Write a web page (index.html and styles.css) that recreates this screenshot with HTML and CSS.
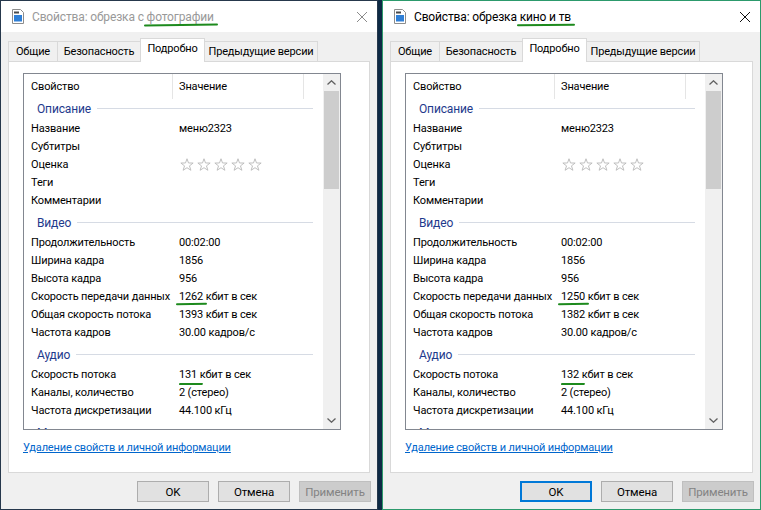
FILE: index.html
```html
<!DOCTYPE html>
<html lang="ru">
<head>
    <meta charset="UTF-8">
    <title>Свойства: обрезка</title>
    <link rel="stylesheet" href="styles.css">
</head>
<body>
    <svg class="defs" width="0" height="0">
        <symbol id="star" viewBox="0 0 13 13">
            <path d="M6.5 0.7L7.9 4.6L12.2 4.7L8.8 7.3L10.1 11.4L6.5 9L2.9 11.4L4.2 7.3L0.8 4.7L5.1 4.6Z" fill="#fff" stroke="#bdbdbd" stroke-width="0.9"/>
        </symbol>
        <symbol id="doc" viewBox="0 0 12 15">
            <path d="M0.5 0.5H8.5L11.5 3.5V14.5H0.5Z" fill="#fff" stroke="#8c8c8c"/>
            <rect x="2" y="2.5" width="5" height="2" fill="#4a4a4a"/>
            <rect x="2" y="6" width="8" height="6.5" fill="#2f7fd6"/>
        </symbol>
        <symbol id="chev" viewBox="0 0 9 5">
            <path d="M0.5 4.5L4.5 0.8L8.5 4.5" fill="none" stroke="#606060" stroke-width="1.3"/>
        </symbol>
    </svg>

    <div class="desktop">
        <!-- окно 1: фотографии -->
        <div class="window">
            <div class="titlebar">
                <svg class="title-icon"><use href="#doc"/></svg>
                <div class="title">Свойства: обрезка с <span class="mark">фотографии</span></div>
                <div class="close">
                    <svg width="10" height="10" viewBox="0 0 10 10"><path d="M0 0L10 10M10 0L0 10" stroke="currentColor" stroke-width="1"/></svg>
                </div>
            </div>
            <div class="content">
                <div class="tabs">
                    <div class="tab tab-general">Общие</div>
                    <div class="tab tab-security">Безопасность</div>
                    <div class="tab tab-details selected">Подробно</div>
                    <div class="tab tab-prev">Предыдущие версии</div>
                </div>
                <div class="panel">
                    <div class="listview">
                        <div class="lv-body">
                            <div class="lv-header">
                                <div class="hcell">Свойство</div>
                                <div class="hcell">Значение</div>
                                <div class="hcell"></div>
                            </div>
                            <div class="group"><span>Описание</span></div>
                            <div class="row"><span>Название</span><span>меню2323</span></div>
                            <div class="row"><span>Субтитры</span><span></span></div>
                            <div class="row"><span>Оценка</span>
                                <span class="stars">
                                    <svg><use href="#star"/></svg><svg><use href="#star"/></svg><svg><use href="#star"/></svg><svg><use href="#star"/></svg><svg><use href="#star"/></svg>
                                </span>
                            </div>
                            <div class="row"><span>Теги</span><span></span></div>
                            <div class="row"><span>Комментарии</span><span></span></div>
                            <div class="group"><span>Видео</span></div>
                            <div class="row"><span>Продолжительность</span><span>00:02:00</span></div>
                            <div class="row"><span>Ширина кадра</span><span>1856</span></div>
                            <div class="row"><span>Высота кадра</span><span>956</span></div>
                            <div class="row"><span>Скорость передачи данных</span><span><span class="mark">1262</span> кбит в сек</span></div>
                            <div class="row"><span>Общая скорость потока</span><span>1393 кбит в сек</span></div>
                            <div class="row"><span>Частота кадров</span><span>30.00 кадров/с</span></div>
                            <div class="group"><span>Аудио</span></div>
                            <div class="row"><span>Скорость потока</span><span><span class="mark low">131</span> кбит в сек</span></div>
                            <div class="row"><span>Каналы, количество</span><span>2 (стерео)</span></div>
                            <div class="row"><span>Частота дискретизации</span><span>44.100 кГц</span></div>
                            <div class="group"><span>Мультимедиа</span></div>
                        </div>
                        <div class="scrollbar">
                            <div class="sb-btn"><svg><use href="#chev"/></svg></div>
                            <div class="sb-track"><div class="sb-thumb"></div></div>
                            <div class="sb-btn down"><svg><use href="#chev"/></svg></div>
                        </div>
                    </div>
                    <a class="link" href="#">Удаление свойств и личной информации</a>
                </div>
                <div class="buttons">
                    <button class="btn">OK</button>
                    <button class="btn">Отмена</button>
                    <button class="btn" disabled>Применить</button>
                </div>
            </div>
        </div>

        <!-- окно 2: кино и тв -->
        <div class="window active">
            <div class="titlebar">
                <svg class="title-icon"><use href="#doc"/></svg>
                <div class="title">Свойства: обрезка <span class="mark">кино и тв</span></div>
                <div class="close">
                    <svg width="10" height="10" viewBox="0 0 10 10"><path d="M0 0L10 10M10 0L0 10" stroke="currentColor" stroke-width="1"/></svg>
                </div>
            </div>
            <div class="content">
                <div class="tabs">
                    <div class="tab tab-general">Общие</div>
                    <div class="tab tab-security">Безопасность</div>
                    <div class="tab tab-details selected">Подробно</div>
                    <div class="tab tab-prev">Предыдущие версии</div>
                </div>
                <div class="panel">
                    <div class="listview">
                        <div class="lv-body">
                            <div class="lv-header">
                                <div class="hcell">Свойство</div>
                                <div class="hcell">Значение</div>
                                <div class="hcell"></div>
                            </div>
                            <div class="group"><span>Описание</span></div>
                            <div class="row"><span>Название</span><span>меню2323</span></div>
                            <div class="row"><span>Субтитры</span><span></span></div>
                            <div class="row"><span>Оценка</span>
                                <span class="stars">
                                    <svg><use href="#star"/></svg><svg><use href="#star"/></svg><svg><use href="#star"/></svg><svg><use href="#star"/></svg><svg><use href="#star"/></svg>
                                </span>
                            </div>
                            <div class="row"><span>Теги</span><span></span></div>
                            <div class="row"><span>Комментарии</span><span></span></div>
                            <div class="group"><span>Видео</span></div>
                            <div class="row"><span>Продолжительность</span><span>00:02:00</span></div>
                            <div class="row"><span>Ширина кадра</span><span>1856</span></div>
                            <div class="row"><span>Высота кадра</span><span>956</span></div>
                            <div class="row"><span>Скорость передачи данных</span><span><span class="mark">1250</span> кбит в сек</span></div>
                            <div class="row"><span>Общая скорость потока</span><span>1382 кбит в сек</span></div>
                            <div class="row"><span>Частота кадров</span><span>30.00 кадров/с</span></div>
                            <div class="group"><span>Аудио</span></div>
                            <div class="row"><span>Скорость потока</span><span><span class="mark low">132</span> кбит в сек</span></div>
                            <div class="row"><span>Каналы, количество</span><span>2 (стерео)</span></div>
                            <div class="row"><span>Частота дискретизации</span><span>44.100 кГц</span></div>
                            <div class="group"><span>Мультимедиа</span></div>
                        </div>
                        <div class="scrollbar">
                            <div class="sb-btn"><svg><use href="#chev"/></svg></div>
                            <div class="sb-track"><div class="sb-thumb"></div></div>
                            <div class="sb-btn down"><svg><use href="#chev"/></svg></div>
                        </div>
                    </div>
                    <a class="link" href="#">Удаление свойств и личной информации</a>
                </div>
                <div class="buttons">
                    <button class="btn default">OK</button>
                    <button class="btn">Отмена</button>
                    <button class="btn" disabled>Применить</button>
                </div>
            </div>
        </div>
    </div>
</body>
</html>
```

FILE: styles.css
```css
* {
    margin: 0;
    padding: 0;
    box-sizing: border-box;
}

body {
    font-family: Roboto, "Noto Sans", sans-serif;
    font-size: 11px;
    letter-spacing: -0.15px;
    color: #000;
    background: #0e2a45;
    overflow: hidden;
}

.defs {
    position: absolute;
}

.desktop {
    display: flex;
    gap: 4px;
    height: 510px;
}

.window {
    width: 378px;
    height: 510px;
    flex-shrink: 0;
    background: #f0f0f0;
    border: 1px solid #26384c;
    display: flex;
    flex-direction: column;
    overflow: hidden;
}

.window.active {
    width: 379px;
    border-color: #2c9a6c;
}

/* заголовок окна */
.titlebar {
    height: 31px;
    flex-shrink: 0;
    background: #fff;
    display: flex;
    align-items: center;
    padding-left: 11px;
}

.title-icon {
    width: 12px;
    height: 15px;
    margin-right: 8px;
}

.title {
    flex: 1;
    font-size: 12px;
    color: #999;
    white-space: nowrap;
}

.active .title {
    color: #000;
}

.close {
    width: 30px;
    display: flex;
    justify-content: center;
    color: #8a8a8a;
}

.active .close {
    color: #111;
}

/* зелёные пометки */
.mark {
    position: relative;
}

.mark::after {
    content: "";
    position: absolute;
    left: -3px;
    right: -4px;
    bottom: -2px;
    height: 2px;
    background: #1d8a1d;
    border-radius: 1px;
    transform: rotate(-0.6deg);
}

.mark.low::after {
    bottom: -4px;
    left: 0;
    right: -6px;
}

.content {
    flex: 1;
    padding: 6px 7px 0 7px;
    display: flex;
    flex-direction: column;
}

/* вкладки */
.tabs {
    display: flex;
    align-items: flex-end;
    height: 23px;
    position: relative;
    z-index: 1;
}

.tab {
    height: 20px;
    line-height: 19px;
    text-align: center;
    border: 1px solid #d9d9d9;
    border-bottom: none;
    margin-right: -1px;
    background: #f0f0f0;
    white-space: nowrap;
}

.tab-general {
    width: 50px;
}

.tab-security {
    width: 84px;
}

.tab-details {
    width: 65px;
}

.tab-prev {
    width: 114px;
}

.tab.selected {
    height: 24px;
    line-height: 20px;
    margin-bottom: -1px;
    background: #fff;
    position: relative;
    z-index: 2;
}

.panel {
    height: 412px;
    background: #fff;
    border: 1px solid #d9d9d9;
    padding: 11px 0 0 14px;
}

/* список свойств */
.listview {
    width: 318px;
    height: 357px;
    border: 1px solid #828790;
    display: flex;
}

.lv-body {
    flex: 1;
    overflow: hidden;
}

.lv-header {
    display: grid;
    grid-template-columns: 149px 131px 1fr;
    height: 23px;
}

.hcell {
    border-right: 1px solid #e5e5e5;
    padding-left: 7px;
    line-height: 25px;
}

.hcell:nth-child(2) {
    padding-left: 6px;
}

.hcell:last-child {
    border-right: none;
}

.group {
    height: 22px;
    margin-top: 2px;
    display: flex;
    align-items: center;
    padding-left: 13px;
    padding-top: 1px;
    font-size: 12px;
    color: #1e3a8c;
}

.lv-header + .group {
    margin-top: 0;
}

.group::after {
    content: "";
    flex: 1;
    height: 1px;
    margin: 0 10px 0 6px;
    background: #d6dbe4;
}

.row {
    display: grid;
    grid-template-columns: 149px 1fr;
    height: 18px;
    line-height: 19px;
    white-space: nowrap;
}

.row > span:first-child {
    padding-left: 7px;
}

.row > span:last-child {
    padding-left: 6px;
}

.stars {
    display: flex;
    align-items: center;
    gap: 3px;
    padding-left: 7px !important;
}

.stars svg {
    width: 14px;
    height: 14px;
}

/* полоса прокрутки */
.scrollbar {
    width: 17px;
    background: #f0f0f0;
    display: flex;
    flex-direction: column;
}

.sb-btn {
    height: 17px;
    display: flex;
    align-items: center;
    justify-content: center;
}

.sb-btn svg {
    width: 9px;
    height: 5px;
}

.sb-btn.down {
    transform: rotate(180deg);
}

.sb-track {
    flex: 1;
}

.sb-thumb {
    height: 98px;
    margin: 0 1px;
    background: #cdcdcd;
}

.link {
    display: inline-block;
    margin-top: 10px;
    line-height: 16px;
    color: #0066cc;
}

/* кнопки */
.buttons {
    display: flex;
    justify-content: flex-end;
    gap: 9px;
    margin: 8px -1px 0 0;
}

.btn {
    width: 72px;
    height: 21px;
    font-family: inherit;
    font-size: 11.5px;
    letter-spacing: inherit;
    color: #000;
    background: #e1e1e1;
    border: 1px solid #adadad;
}

.btn.default {
    border-color: #0078d7;
    box-shadow: inset 0 0 0 1px #0078d7;
}

.btn:disabled {
    color: #838383;
    background: #cccccc;
    border-color: #bfbfbf;
}
```
